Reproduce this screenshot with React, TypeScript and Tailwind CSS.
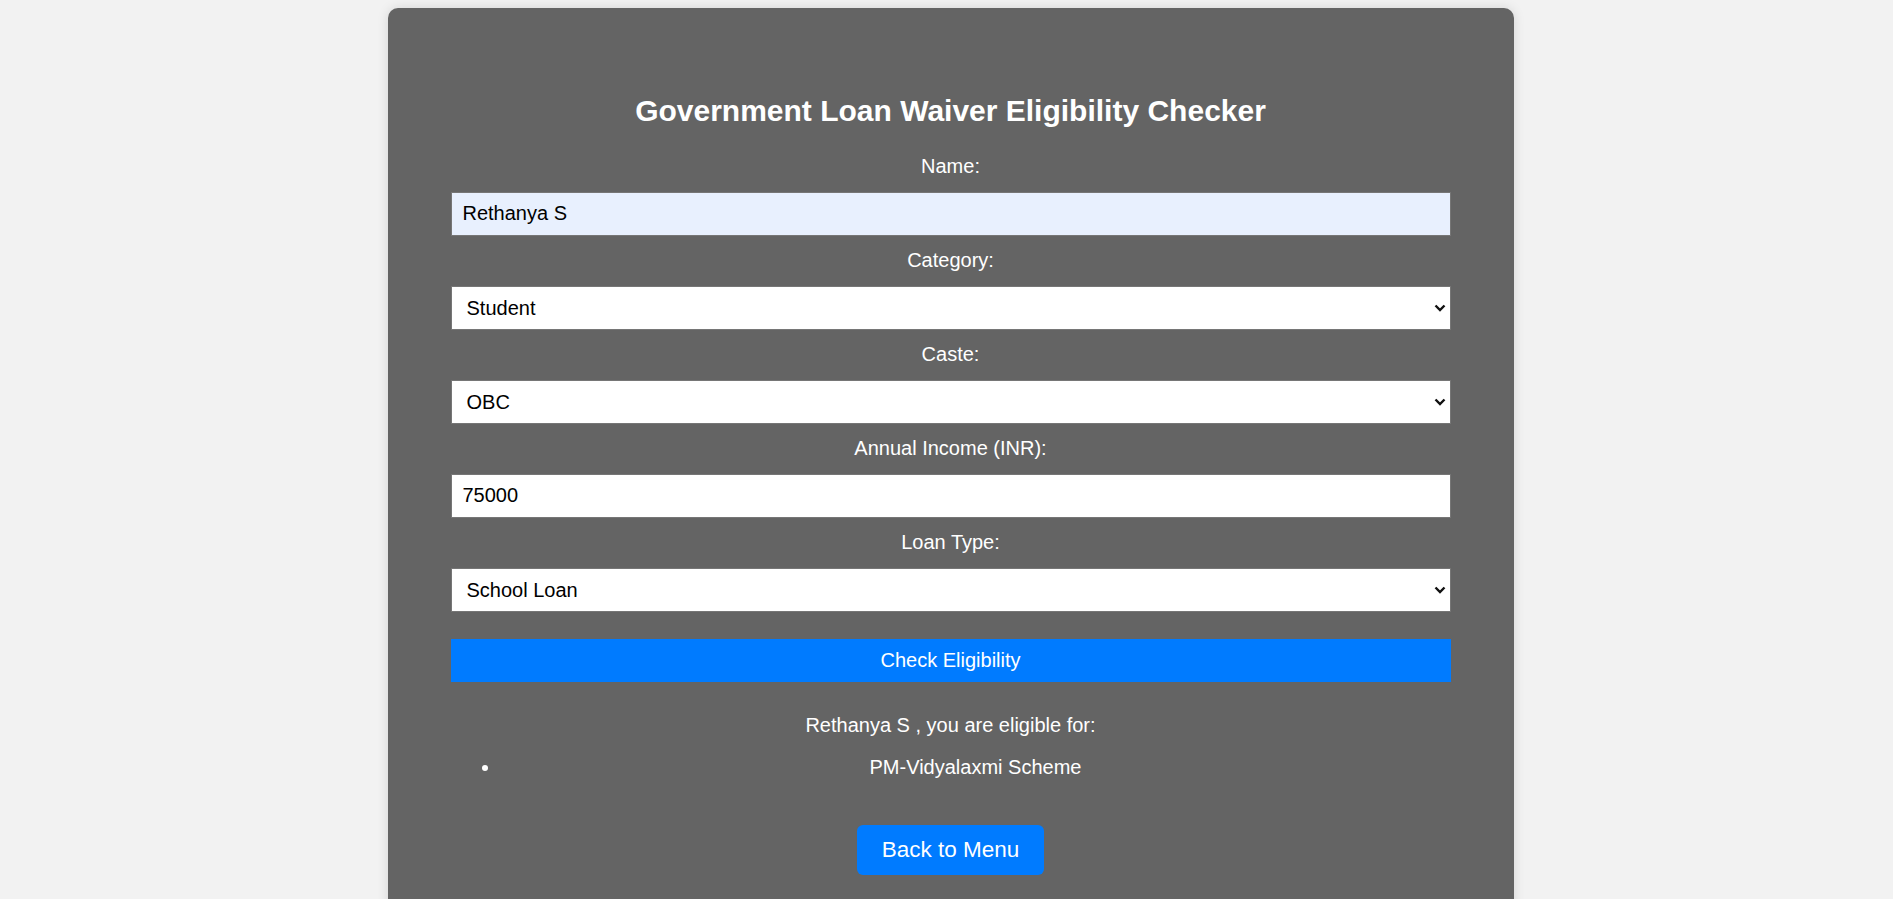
import type { ReactNode } from "react";

const Chevron = () => (
  <svg
    className="pointer-events-none absolute right-[5px] top-1/2 -translate-y-1/2"
    width="12"
    height="8"
    viewBox="0 0 12 8"
    fill="none"
  >
    <path d="M1.5 1.5L6 6L10.5 1.5" stroke="#111" strokeWidth="2.4" />
  </svg>
);

const Label = ({ children }: { children: ReactNode }) => (
  <label className="mt-[12.5px] block text-center text-[20px] leading-[23px] text-white first:mt-[26.5px]">
    {children}
  </label>
);

const Select = ({ value, options }: { value: string; options: string[] }) => (
  <div className="relative mt-[14px]">
    <select
      defaultValue={value}
      className="h-[44.5px] w-full appearance-none border border-[#767676] bg-white px-[15px] text-[20px] text-black outline-none"
    >
      {options.map((o) => (
        <option key={o}>{o}</option>
      ))}
    </select>
    <Chevron />
  </div>
);

const App = () => {
  return (
    <div className="flex min-h-screen justify-center bg-[#f2f2f2] pl-[8px] font-['Liberation_Sans',Arial,sans-serif]">
      <div className="mb-[8px] mt-[8px] flex w-[1126px] flex-col rounded-[10px] bg-[#646464] px-[63px] pb-[60px] pt-[86px] shadow-[0_0_12px_rgba(0,0,0,0.12)]">
        <h2 className="text-center text-[30px] font-bold leading-[34px] text-white">
          Government Loan Waiver Eligibility Checker
        </h2>
        <form className="flex flex-col" onSubmit={(e) => e.preventDefault()}>
          <Label>Name:</Label>
          <input
            defaultValue="Rethanya S"
            className="mt-[14px] h-[44.5px] w-full border border-[#767676] bg-[#e8f0fe] px-[11px] text-[20px] text-black outline-none"
          />
          <Label>Category:</Label>
          <Select value="Student" options={["Farmer", "Student", "Small Business Owner"]} />
          <Label>Caste:</Label>
          <Select value="OBC" options={["General", "OBC", "SC", "ST"]} />
          <Label>Annual Income (INR):</Label>
          <input
            defaultValue="75000"
            className="mt-[14px] h-[44.5px] w-full border border-[#767676] bg-white px-[11px] text-[20px] text-black outline-none"
          />
          <Label>Loan Type:</Label>
          <Select value="School Loan" options={["Crop Loan", "School Loan", "Business Loan"]} />
          <button className="mt-[27px] h-[42.5px] w-full bg-[#007bff] text-[20px] text-white">
            Check Eligibility
          </button>
        </form>
        <p className="mt-[32.5px] text-center text-[20px] leading-[23px] text-white">
          Rethanya S , you are eligible for:
        </p>
        <ul className="mt-[18.5px] list-disc pl-[50px] text-white">
          <li className="text-center text-[20px] leading-[23px]">PM-Vidyalaxmi Scheme</li>
        </ul>
        <button className="mt-[46.5px] h-[50px] self-center rounded-[6px] bg-[#007bff] px-[25px] text-[22.5px] text-white">
          Back to Menu
        </button>
      </div>
    </div>
  );
};

export default App;
